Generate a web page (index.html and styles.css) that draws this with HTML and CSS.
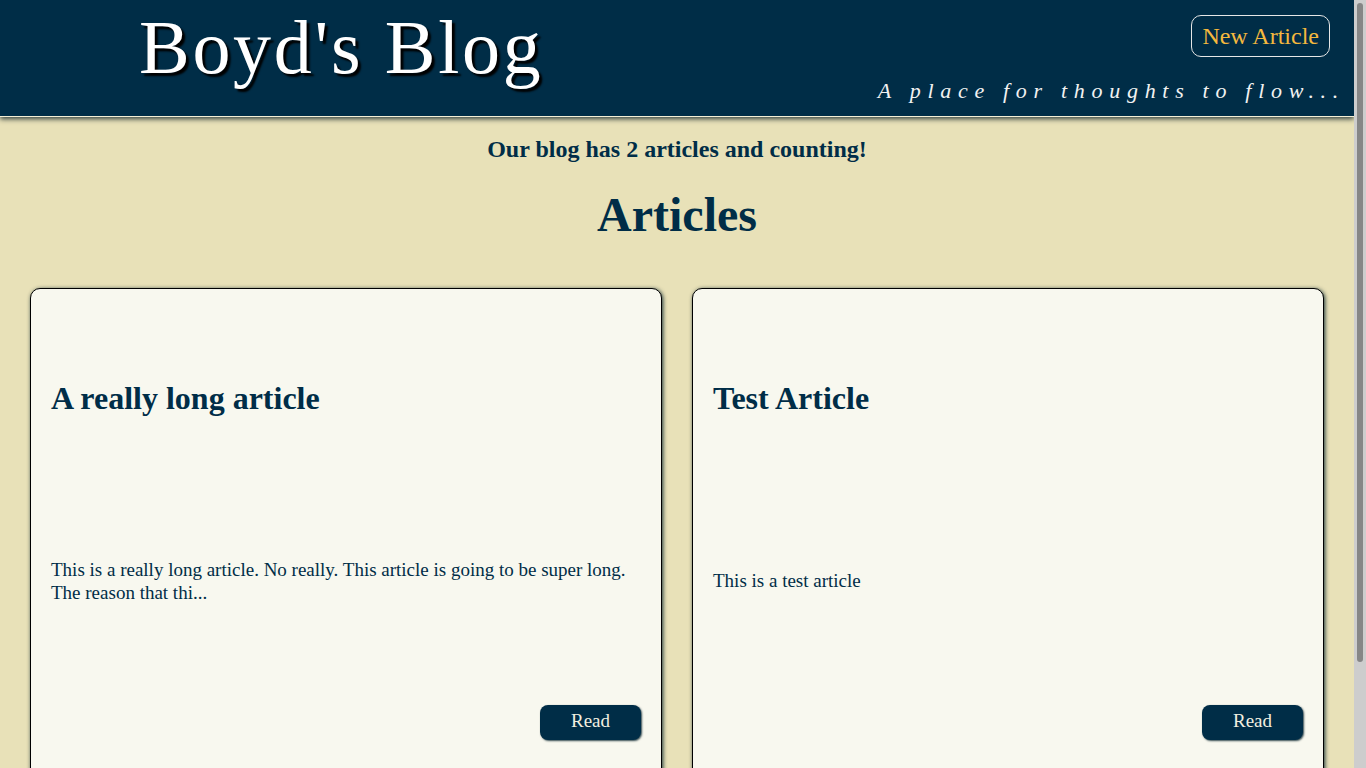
FILE: index.html
```html
<!DOCTYPE html>
<html lang="en">
<head>
<meta charset="utf-8">
<title>Boyd's Blog</title>
<link rel="stylesheet" href="styles.css">
</head>
<body>
<div class="page">
  <header class="site-header">
    <h1 class="site-title">Boyd's Blog</h1>
    <div class="header-side">
      <a class="new-article" href="#">New Article</a>
      <p class="tagline">A place for thoughts to flow...</p>
    </div>
  </header>
  <main class="main">
    <p class="count">Our blog has 2 articles and counting!</p>
    <h2 class="section-title">Articles</h2>
    <div class="cards">
      <article class="card">
        <div class="card-head"><h3 class="card-title">A really long article</h3></div>
        <div class="card-body"><p class="card-text">This is a really long article. No really. This article is going to be super long. The reason that thi...</p></div>
        <div class="card-foot"><a class="read-btn" href="#">Read</a></div>
      </article>
      <article class="card">
        <div class="card-head"><h3 class="card-title">Test Article</h3></div>
        <div class="card-body"><p class="card-text">This is a test article</p></div>
        <div class="card-foot"><a class="read-btn" href="#">Read</a></div>
      </article>
    </div>
  </main>
</div>
<div class="scrollbar" aria-hidden="true"><div class="scrollbar-thumb"></div></div>
</body>
</html>
```
FILE: styles.css
```css
* { box-sizing: border-box; }
html, body { margin: 0; padding: 0; }
body {
  background: #e8e1b8;
  color: #002d47;
  font-family: "Liberation Serif", "Times New Roman", serif;
}
.page { margin-right: 12px; }
.scrollbar {
  position: fixed;
  top: 0;
  right: 0;
  width: 12px;
  height: 100vh;
  background: #cdcdcd;
  padding: 3px 3px 0;
  z-index: 5;
}
.scrollbar-thumb {
  width: 6px;
  height: 659px;
  background: #868686;
  border-radius: 3px;
}
.site-header {
  height: 117px;
  background: #002d47;
  border-bottom: 1px solid #f4efd6;
  box-shadow: 0 2px 5px rgba(0, 20, 30, 0.8);
  display: flex;
  justify-content: space-between;
  padding: 0 9px 0 139px;
  position: relative;
  z-index: 1;
}
.site-title {
  margin: 9px 0 0;
  font-size: 76px;
  line-height: 76px;
  font-weight: normal;
  letter-spacing: 2.7px;
  color: #ffffff;
  text-shadow: 3px 3px 2px #000;
}
.header-side {
  display: flex;
  flex-direction: column;
  align-items: flex-end;
  justify-content: space-between;
  padding: 15px 0 12px;
}
.new-article {
  margin-right: 15px;
  height: 42px;
  display: flex;
  align-items: center;
  padding: 0 10px;
  border: 1px solid #e6e6e6;
  border-radius: 10px;
  color: #f4b83e;
  font-size: 24px;
  text-decoration: none;
}
.tagline {
  margin: 0;
  font-size: 22px;
  line-height: 26px;
  font-style: italic;
  letter-spacing: 6.7px;
  color: #f2f2f2;
}
.main { padding: 18px 30px 30px; }
.count {
  margin: 0;
  text-align: center;
  font-size: 24px;
  line-height: 28px;
  font-weight: bold;
}
.section-title {
  margin: 24px 0 45px;
  text-align: center;
  font-size: 48px;
  line-height: 56px;
  font-weight: bold;
}
.cards {
  display: grid;
  grid-template-columns: 1fr 1fr;
  gap: 30px;
}
.card {
  background: #f8f8ef;
  border: 1px solid #000;
  border-radius: 10px;
  box-shadow: 1px 1px 4px rgba(0, 30, 40, 0.9);
  padding: 0 20px;
  display: grid;
  grid-template-rows: 218px 147px auto;
}
.card-head, .card-body { display: flex; align-items: center; }
.card-title {
  margin: 0;
  font-size: 32px;
  line-height: 38px;
  font-weight: bold;
}
.card-text {
  margin: 0;
  font-size: 19px;
  line-height: 23px;
}
.card-foot {
  display: flex;
  justify-content: flex-end;
  padding: 51px 0 40px;
}
.read-btn {
  width: 101px;
  height: 35px;
  display: flex;
  align-items: center;
  justify-content: center;
  padding-bottom: 3px;
  background: #002d47;
  color: #f2efe0;
  border-radius: 8px;
  box-shadow: 1px 1px 2px rgba(0, 30, 40, 0.8);
  font-size: 19px;
  text-decoration: none;
}
```
